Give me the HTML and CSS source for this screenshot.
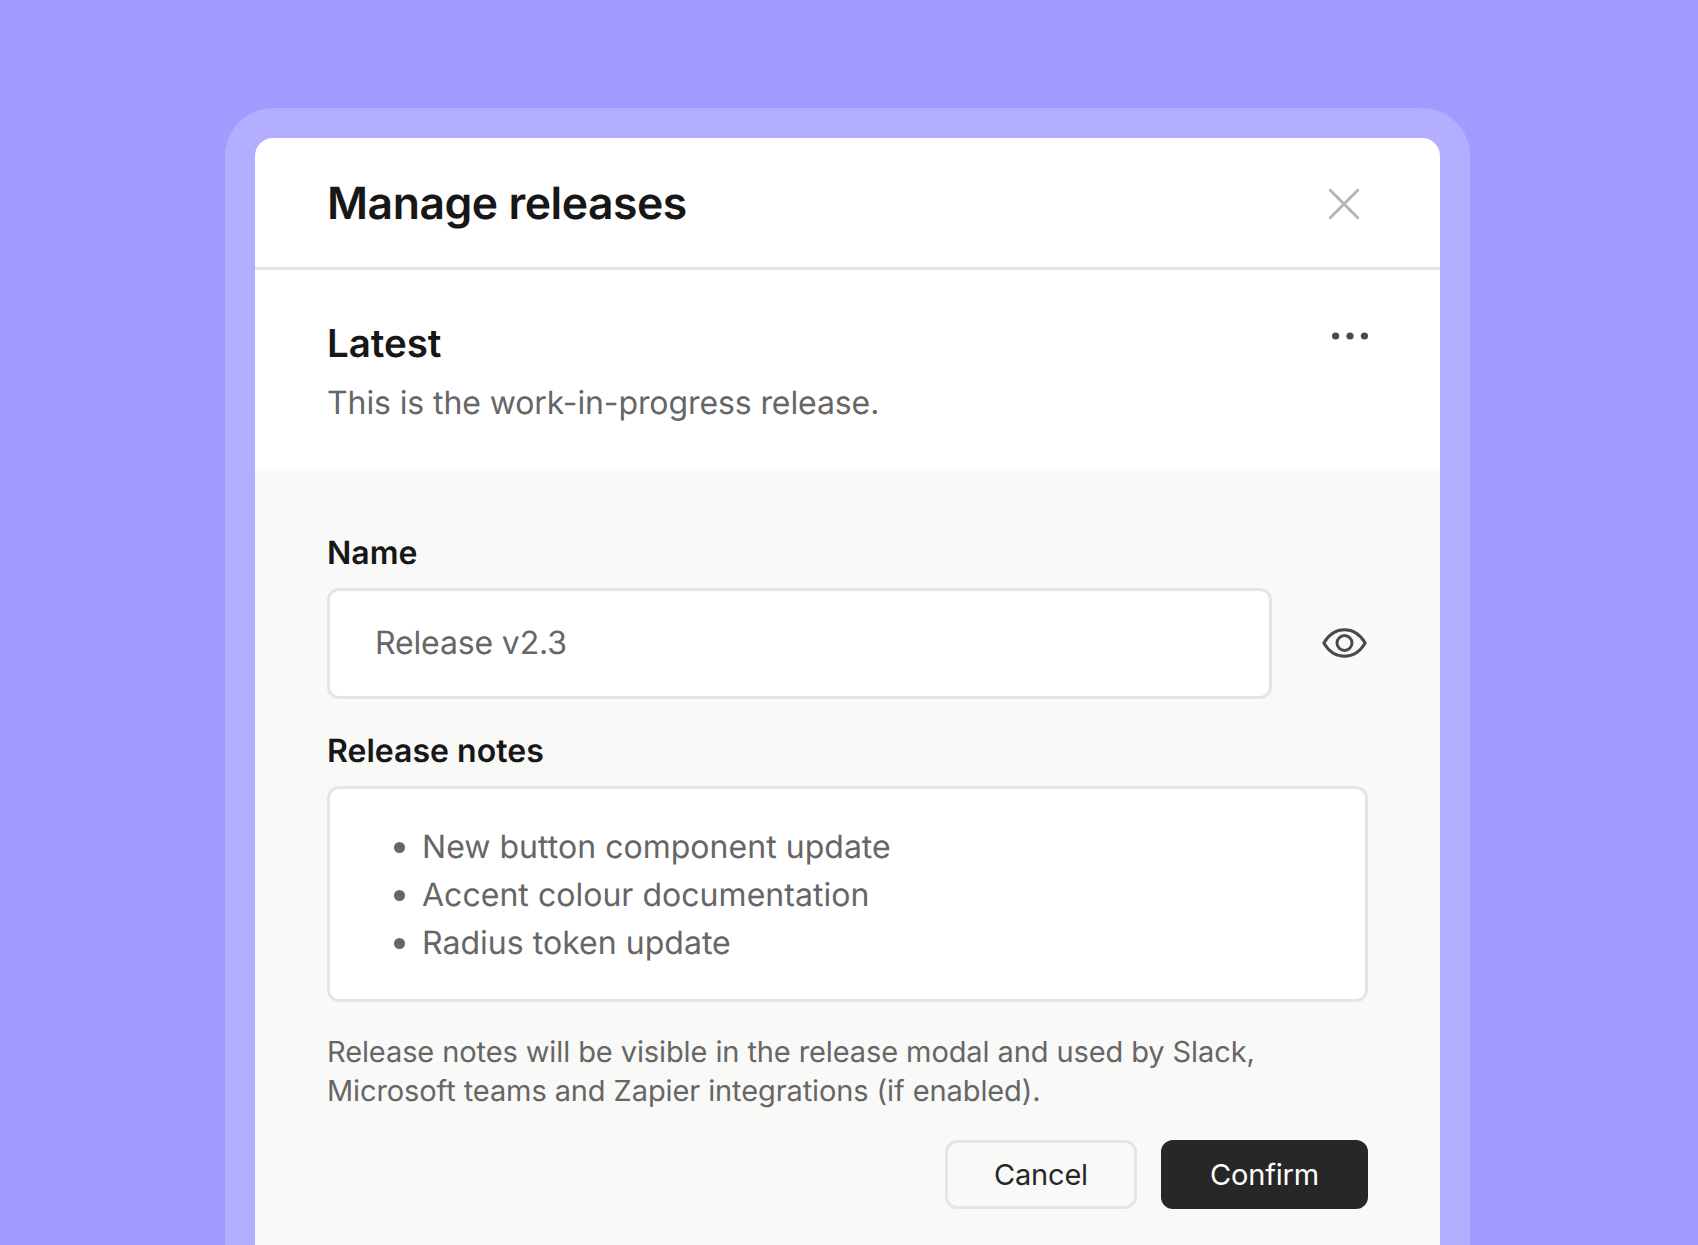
FILE: index.html
```html
<!DOCTYPE html>
<html lang="en">
<head>
<meta charset="utf-8">
<title>Manage releases</title>
<link rel="stylesheet" href="styles.css">
</head>
<body>
<main class="frame">
  <section class="modal">
    <header class="modal-head">
      <h1 class="title">Manage releases</h1>
      <svg class="close" width="30" height="30" viewBox="0 0 30 30" aria-label="Close"><path d="M1 1L29 29M29 1L1 29" fill="none" stroke="#b5b5b5" stroke-width="3" stroke-linecap="round"/></svg>
    </header>
    <div class="intro">
      <div class="intro-text">
        <h2 class="subtitle">Latest</h2>
        <p class="desc">This is the work-in-progress release.</p>
      </div>
      <svg class="more" width="36" height="8" viewBox="0 0 36 8" aria-label="More"><circle cx="3.6" cy="4" r="3.6"/><circle cx="18" cy="4" r="3.6"/><circle cx="32.4" cy="4" r="3.6"/></svg>
    </div>
    <div class="form">
      <div class="label">Name</div>
      <div class="name-row">
        <div class="input">Release v2.3</div>
        <svg class="eye" width="45" height="30" viewBox="0 0 45 30" aria-label="Preview"><path d="M1.8 15C7 6.2 14 1.8 22.5 1.8S38 6.2 43.200 15C38 23.800 31 28.200 22.500 28.200S7 23.800 1.800 15Z" fill="none" stroke="#4a4a4a" stroke-width="3" stroke-linejoin="round"/><circle cx="22.500" cy="15" r="7.500" fill="none" stroke="#4a4a4a" stroke-width="3"/></svg>
      </div>
      <div class="label label-notes">Release notes</div>
      <div class="notes">
        <ul class="notes-list">
          <li>New button component update</li>
          <li>Accent colour documentation</li>
          <li>Radius token update</li>
        </ul>
      </div>
      <p class="help">Release notes will be visible in the release modal and used by Slack,<br>Microsoft teams and Zapier integrations (if enabled).</p>
      <div class="actions">
        <button class="btn btn-cancel">Cancel</button>
        <button class="btn btn-confirm">Confirm</button>
      </div>
    </div>
  </section>
</main>
</body>
</html>
```
FILE: styles.css
```css
* { box-sizing: border-box; }
html, body { margin: 0; height: 100%; }
body {
  background: #a29bff;
  font-family: Inter, "Liberation Sans", sans-serif;
  color: #171717;
  overflow: hidden;
  padding: 108px 228px 0 225px;
  text-rendering: geometricPrecision;
}
.frame {
  height: 1137px;
  background: #b3aeff;
  border-radius: 48px 48px 0 0;
  padding: 30px 30px 0;
}
.modal {
  height: 100%;
  background: #fff;
  border-radius: 18px 18px 0 0;
  overflow: hidden;
  display: flex;
  flex-direction: column;
}
.modal-head {
  height: 132px;
  flex: none;
  border-bottom: 3px solid #e5e5e3;
  padding: 2px 81px 0 72px;
  display: flex;
  align-items: center;
  justify-content: space-between;
}
.title { margin: 0; font-size: 44.5px; font-weight: 600; letter-spacing: -0.47px; line-height: 1.2; }
.intro {
  height: 201px;
  flex: none;
  padding: 50px 72px 0;
  display: flex;
  justify-content: space-between;
  align-items: flex-start;
}
.subtitle { margin: 0; font-size: 38.5px; font-weight: 600; letter-spacing: -0.05px; line-height: 48px; }
.desc { margin: 11px 0 0; font-size: 32px; letter-spacing: -0.1px; line-height: 48px; color: #666; }
.more { fill: #4a4a4a; margin-top: 12px; }
.form { flex: 1; background: #f9f9f7; padding: 62px 72px 0; }
.label { font-size: 32px; font-weight: 600; letter-spacing: 0.02px; line-height: 40px; }
.name-row { display: flex; align-items: center; justify-content: space-between; margin-top: 15px; }
.input {
  width: 945px;
  height: 111px;
  background: #fff;
  border: 3px solid #e5e5e3;
  border-radius: 12px;
  padding: 0 45px 2px;
  display: flex;
  align-items: center;
  font-size: 32px;
  letter-spacing: -0.15px;
  color: #666;
}
.eye { margin: 0 1px 2px 0; }
.label-notes { margin-top: 32px; }
.notes {
  height: 216px;
  margin-top: 15px;
  background: #fff;
  border: 3px solid #e5e5e3;
  border-radius: 12px;
  display: flex;
  align-items: center;
}
.notes-list { margin: 0; padding: 2px 0 0 92px; font-size: 32px; letter-spacing: 0.03px; line-height: 48px; color: #666; }
.notes-list li::marker { font-size: 34px; }
.help { margin: 30px 0 0; font-size: 29px; letter-spacing: -0.1px; line-height: 39px; color: #666; }
.actions { display: flex; justify-content: flex-end; gap: 24px; margin-top: 30px; }
.btn { height: 69px; border-radius: 12px; font: 400 29px/1 Inter, "Liberation Sans", sans-serif; letter-spacing: -0.2px; }
.btn-cancel { width: 192px; background: transparent; border: 3px solid #e5e5e3; color: #282727; }
.btn-confirm { width: 207px; background: #282727; border: 0; color: #fff; }
```
